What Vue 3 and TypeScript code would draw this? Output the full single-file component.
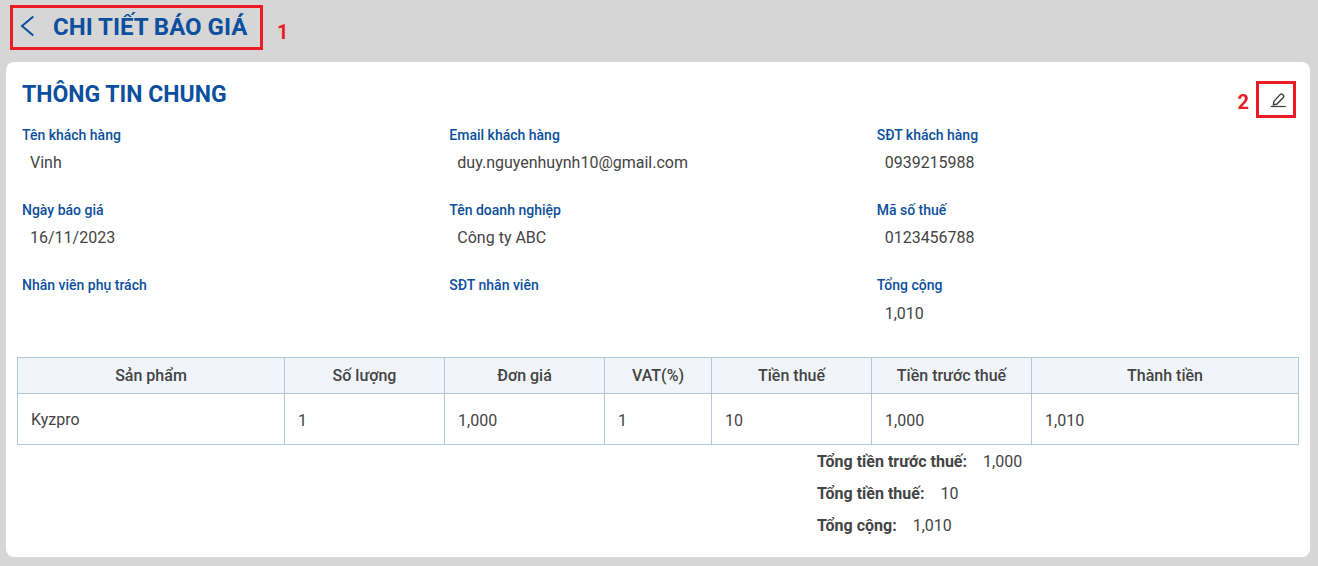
<script setup lang="ts">
const fields = [
  { label: 'Tên khách hàng', value: 'Vinh' },
  { label: 'Email khách hàng', value: 'duy.nguyenhuynh10@gmail.com' },
  { label: 'SĐT khách hàng', value: '0939215988' },
  { label: 'Ngày báo giá', value: '16/11/2023' },
  { label: 'Tên doanh nghiệp', value: 'Công ty ABC' },
  { label: 'Mã số thuế', value: '0123456788' },
  { label: 'Nhân viên phụ trách', value: '' },
  { label: 'SĐT nhân viên', value: '' },
  { label: 'Tổng cộng', value: '1,010' },
]
const columns = [
  { name: 'Sản phẩm', value: 'Kyzpro', width: 267 },
  { name: 'Số lượng', value: '1', width: 160 },
  { name: 'Đơn giá', value: '1,000', width: 160 },
  { name: 'VAT(%)', value: '1', width: 107 },
  { name: 'Tiền thuế', value: '10', width: 160 },
  { name: 'Tiền trước thuế', value: '1,000', width: 160 },
  { name: 'Thành tiền', value: '1,010', width: 267 },
]
const totals = [
  { label: 'Tổng tiền trước thuế:', value: '1,000' },
  { label: 'Tổng tiền thuế:', value: '10' },
  { label: 'Tổng cộng:', value: '1,010' },
]
</script>

<template>
  <div class="page">
    <header class="top">
      <div class="title-box">
        <svg class="back" width="16" height="22" viewBox="0 0 16 22" fill="none">
          <path d="M14.3 1.5 L3 11 L14.3 20.5" stroke="#0b4f9e" stroke-width="2" />
        </svg>
        <h1>CHI TIẾT BÁO GIÁ</h1>
      </div>
      <span class="mark mark-one">1</span>
    </header>

    <main class="card">
      <div class="card-head">
        <h2>THÔNG TIN CHUNG</h2>
        <div class="edit-wrap">
          <span class="mark mark-two">2</span>
          <div class="edit-box">
            <svg class="pen" width="16" height="16" viewBox="0 0 16 16" fill="none" stroke="#3c3c3c" stroke-width="1.4">
              <path d="M3.9 9.4 L10.3 2.4 Q11.2 1.5 12.2 2.3 L13.5 3.5 Q14.3 4.4 13.5 5.3 L7 12 L3.4 12.9 Z" />
              <path d="M0.7 14.5 H15.7" stroke-width="1.2" />
            </svg>
          </div>
        </div>
      </div>

      <section class="fields">
        <div v-for="f in fields" :key="f.label" class="field">
          <div class="label">{{ f.label }}</div>
          <div class="value">{{ f.value }}</div>
        </div>
      </section>

      <div class="table">
        <div v-for="c in columns" :key="c.name" class="col" :style="{ width: c.width + 'px' }">
          <div class="th">{{ c.name }}</div>
          <div class="td">{{ c.value }}</div>
        </div>
      </div>

      <div class="totals">
        <div v-for="t in totals" :key="t.label" class="total">
          <b>{{ t.label }}</b><span>{{ t.value }}</span>
        </div>
      </div>
    </main>
  </div>
</template>

<style>
html, body { margin: 0; background: #d6d6d6; }
</style>

<style scoped>
.page {
  width: 1318px;
  height: 566px;
  overflow: hidden;
  background: #d6d6d6;
  font-family: Roboto, "Liberation Sans", sans-serif;
  color: #444;
  box-sizing: border-box;
  padding: 5px 8px 0 6px;
}
.top { display: flex; align-items: center; height: 45px; padding-left: 4px; margin-bottom: 12px; }
.title-box {
  box-sizing: border-box;
  width: 253px;
  height: 45px;
  border: 3px solid #ed1c24;
  display: flex;
  align-items: center;
  padding-left: 6px;
}
.back { margin-right: 18px; margin-top: -3px; }
h1 { margin: -1px 0 0; font-size: 24px; font-weight: 700; color: #0b4f9e; line-height: 1; }
.mark { color: #ed1c24; font-weight: 700; font-size: 20px; }
.mark-one { margin-left: 14px; margin-top: 9px; }
.mark-two { margin-top: 4px; }
.card {
  box-sizing: border-box;
  width: 1304px;
  height: 495px;
  background: #fff;
  border-radius: 8px;
  padding: 0 11px;
}
.card-head { display: flex; justify-content: space-between; height: 58px; padding-left: 5px; position: relative; }
h2 { margin: 20px 0 0; font-size: 23px; font-weight: 700; color: #0b4f9e; line-height: 26px; }
.edit-wrap { display: flex; align-items: center; gap: 7px; position: absolute; right: 3px; top: 19px; }
.edit-box {
  box-sizing: border-box;
  width: 40px;
  height: 37px;
  border: 3px solid #ed1c24;
  display: flex;
  align-items: center;
  justify-content: center;
}
.pen { margin-left: 3px; }
.fields { display: grid; grid-template-columns: repeat(3, 427.33px); }
.field { height: 75.1px; padding: 6px 5px 0; box-sizing: border-box; }
.label { font-size: 14px; line-height: 18px; font-weight: 500; color: #0b4f9e; }
.value { font-size: 16px; line-height: 20px; margin-top: 9.35px; padding-left: 8px; color: #444; }
.table {
  display: flex;
  width: 1282px;
  margin-top: 11.7px;
  box-sizing: border-box;
  border: 1px solid #aec8e0;
  border-right: 0;
}
.col { box-sizing: border-box; border-right: 1px solid #aec8e0; flex: none; }
.th {
  height: 36px;
  background: #f1f5fa;
  border-bottom: 1px solid #aec8e0;
  box-sizing: border-box;
  text-align: center;
  font-size: 16px;
  font-weight: 500;
  line-height: 35px;
  color: #444;
}
.td { height: 50px; padding-left: 13px; font-size: 16px; line-height: 53px; color: #444; }
.col:first-child .td { line-height: 51px; }
.totals { margin-left: 800px; margin-top: 1px; }
.total { height: 32px; font-size: 16px; line-height: 32px; display: flex; }
.total b { font-weight: 700; margin-right: 16px; }
</style>
